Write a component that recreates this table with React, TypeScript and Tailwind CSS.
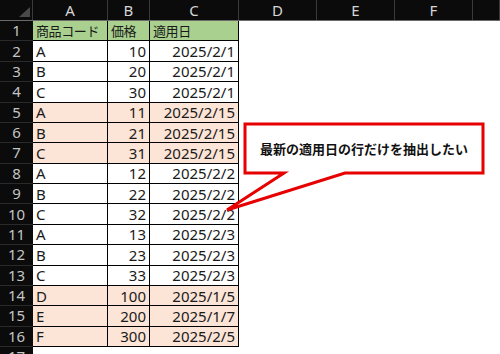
import { FC } from "react";

type Row = { code: string; price: string; date: string; tint?: boolean };

const rows: Row[] = [
  { code: "A", price: "10", date: "2025/2/1" },
  { code: "B", price: "20", date: "2025/2/1" },
  { code: "C", price: "30", date: "2025/2/1" },
  { code: "A", price: "11", date: "2025/2/15", tint: true },
  { code: "B", price: "21", date: "2025/2/15", tint: true },
  { code: "C", price: "31", date: "2025/2/15", tint: true },
  { code: "A", price: "12", date: "2025/2/2" },
  { code: "B", price: "22", date: "2025/2/2" },
  { code: "C", price: "32", date: "2025/2/2" },
  { code: "A", price: "13", date: "2025/2/3" },
  { code: "B", price: "23", date: "2025/2/3" },
  { code: "C", price: "33", date: "2025/2/3" },
  { code: "D", price: "100", date: "2025/1/5", tint: true },
  { code: "E", price: "200", date: "2025/1/7", tint: true },
  { code: "F", price: "300", date: "2025/2/5", tint: true },
];

const cols = [
  { label: "A", w: "w-[75px]" },
  { label: "B", w: "w-[42px]" },
  { label: "C", w: "w-[89px]" },
  { label: "D", w: "w-[78px]" },
  { label: "E", w: "w-[78px]" },
  { label: "F", w: "w-[78px]" },
  { label: "", w: "flex-1" },
];

const font = "font-['Noto_Sans','Noto_Sans_CJK_JP',sans-serif]";

const RowHead: FC<{ n: number }> = ({ n }) => (
  <div className="w-[33px] shrink-0 h-full bg-[#0b0b0b] border-b border-[#2a2a2a] flex items-center justify-center text-[15px] text-[#c4c4c4] leading-none">
    {n}
  </div>
);

const Cell: FC<{ w: string; bg: string; right?: boolean; cjk?: boolean; children: React.ReactNode }> = ({
  w,
  bg,
  right,
  cjk,
  children,
}) => (
  <div
    className={`${w} shrink-0 h-full ${bg} border-r border-b border-black flex items-center pt-[1px] ${
      right ? "justify-end pr-[3px]" : "pl-[3px]"
    } ${cjk ? "text-[13px] tracking-[-0.4px]" : "text-[15px]"} text-[#1a1a1a] leading-none overflow-hidden whitespace-nowrap`}>
    {children}
  </div>
);

const App: FC = () => {
  return (
    <div className={`relative w-[500px] h-[354px] overflow-hidden bg-white ${font}`}>
      {/* column headers */}
      <div className="flex h-[21px] bg-[#0b0b0b] border-b border-[#6b6b6b]">
        <div className="relative w-[33px] shrink-0 h-full border-r border-[#3a3a3a]">
          <svg className="absolute left-0 top-0" width="33" height="21">
            <polygon points="30,7 30,17 19,17" fill="#4a4a4a" />
          </svg>
        </div>
        {cols.map((c, i) => (
          <div
            key={i}
            className={`${c.w} shrink-0 h-full border-r border-[#3a3a3a] flex items-center justify-center text-[15px] text-[#d6d6d6] leading-none`}>
            {c.label}
          </div>
        ))}
      </div>

      {/* row 1 */}
      <div className="flex h-[20.375px]">
        <RowHead n={1} />
        <Cell w="w-[75px]" bg="bg-[#a9d08e]" cjk>商品コード</Cell>
        <Cell w="w-[42px]" bg="bg-[#a9d08e]" cjk>価格</Cell>
        <Cell w="w-[89px]" bg="bg-[#a9d08e]" cjk>適用日</Cell>
        <div className="flex-1" />
      </div>

      {rows.map((r, i) => {
        const bg = r.tint ? "bg-[#fce4d6]" : "bg-white";
        return (
          <div key={i} className="flex h-[20.375px]">
            <RowHead n={i + 2} />
            <Cell w="w-[75px]" bg={bg}>{r.code}</Cell>
            <Cell w="w-[42px]" bg={bg} right>{r.price}</Cell>
            <Cell w="w-[89px]" bg={bg} right>{r.date}</Cell>
            <div className="flex-1" />
          </div>
        );
      })}

      <div className="flex h-[20.375px]">
        <RowHead n={17} />
        <div className="flex-1" />
      </div>

      {/* callout */}
      <svg className="absolute left-0 top-0 pointer-events-none" width="500" height="354">
        <path
          d="M245,124 H483 V173 H345 L227,210 L284,173 H245 Z"
          fill="white"
          stroke="#e60000"
          strokeWidth="3"
          strokeLinejoin="miter"
        />
      </svg>
      <div className="absolute left-[245px] top-[124px] w-[238px] h-[49px] flex items-center justify-center font-['Noto_Sans_CJK_JP',sans-serif] text-[13px] font-bold text-[#111] leading-none">
        最新の適用日の行だけを抽出したい
      </div>
    </div>
  );
};

export default App;
